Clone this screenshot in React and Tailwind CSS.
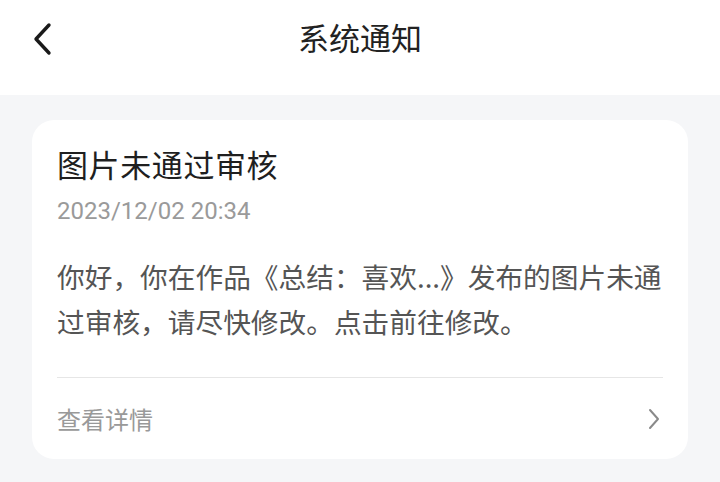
import React from "react";

const font = { fontFamily: '"Noto Sans CJK SC", "Noto Sans", sans-serif' };

function BackIcon() {
  return (
    <svg width="24" height="36" viewBox="0 0 24 36" fill="none">
      <path d="M19 4 L6 18 L19 32" stroke="#1a1a1a" strokeWidth="3.4" strokeLinecap="round" strokeLinejoin="round" />
    </svg>
  );
}

function ChevronRight() {
  return (
    <svg width="14" height="24" viewBox="0 0 14 24" fill="none">
      <path d="M3 3 L11 12 L3 21" stroke="#8a8a8a" strokeWidth="2" strokeLinecap="round" strokeLinejoin="round" />
    </svg>
  );
}

export default function App() {
  return (
    <div className="w-[720px] h-[482px] bg-[#f5f6f8] overflow-hidden" style={font}>
      {/* Header */}
      <div className="relative h-[95px] bg-white flex items-center justify-center">
        <div className="absolute left-[30px] top-[21px]">
          <BackIcon />
        </div>
        <h1 className="text-[31px] text-[#222] -mt-[20px]">系统通知</h1>
      </div>

      {/* Card */}
      <div className="mx-[32px] mt-[25px] bg-white rounded-[22px] px-[25px] pt-[24px]">
        <h2 className="text-[31px] leading-[40px] text-[#1f1f1f] tracking-[0.6px]">图片未通过审核</h2>
        <p className="mt-[11px] text-[24px] leading-[32px] text-[#9a9a9a]" style={{ fontFamily: '"Roboto", "Noto Sans", sans-serif' }}>
          2023/12/02 20:34
        </p>
        <p className="mt-[27px] text-[27.7px] leading-[45px] text-[#555]">
          你好，你在作品《总结：喜欢...》发布的图片未通过审核，请尽快修改。点击前往修改。
        </p>
        <div className="mt-[33px] border-t border-[#e6e6e6] h-[82px] flex items-center justify-between">
          <span className="text-[24px] text-[#999]">查看详情</span>
          <span className="mr-[2px]">
            <ChevronRight />
          </span>
        </div>
      </div>
    </div>
  );
}
